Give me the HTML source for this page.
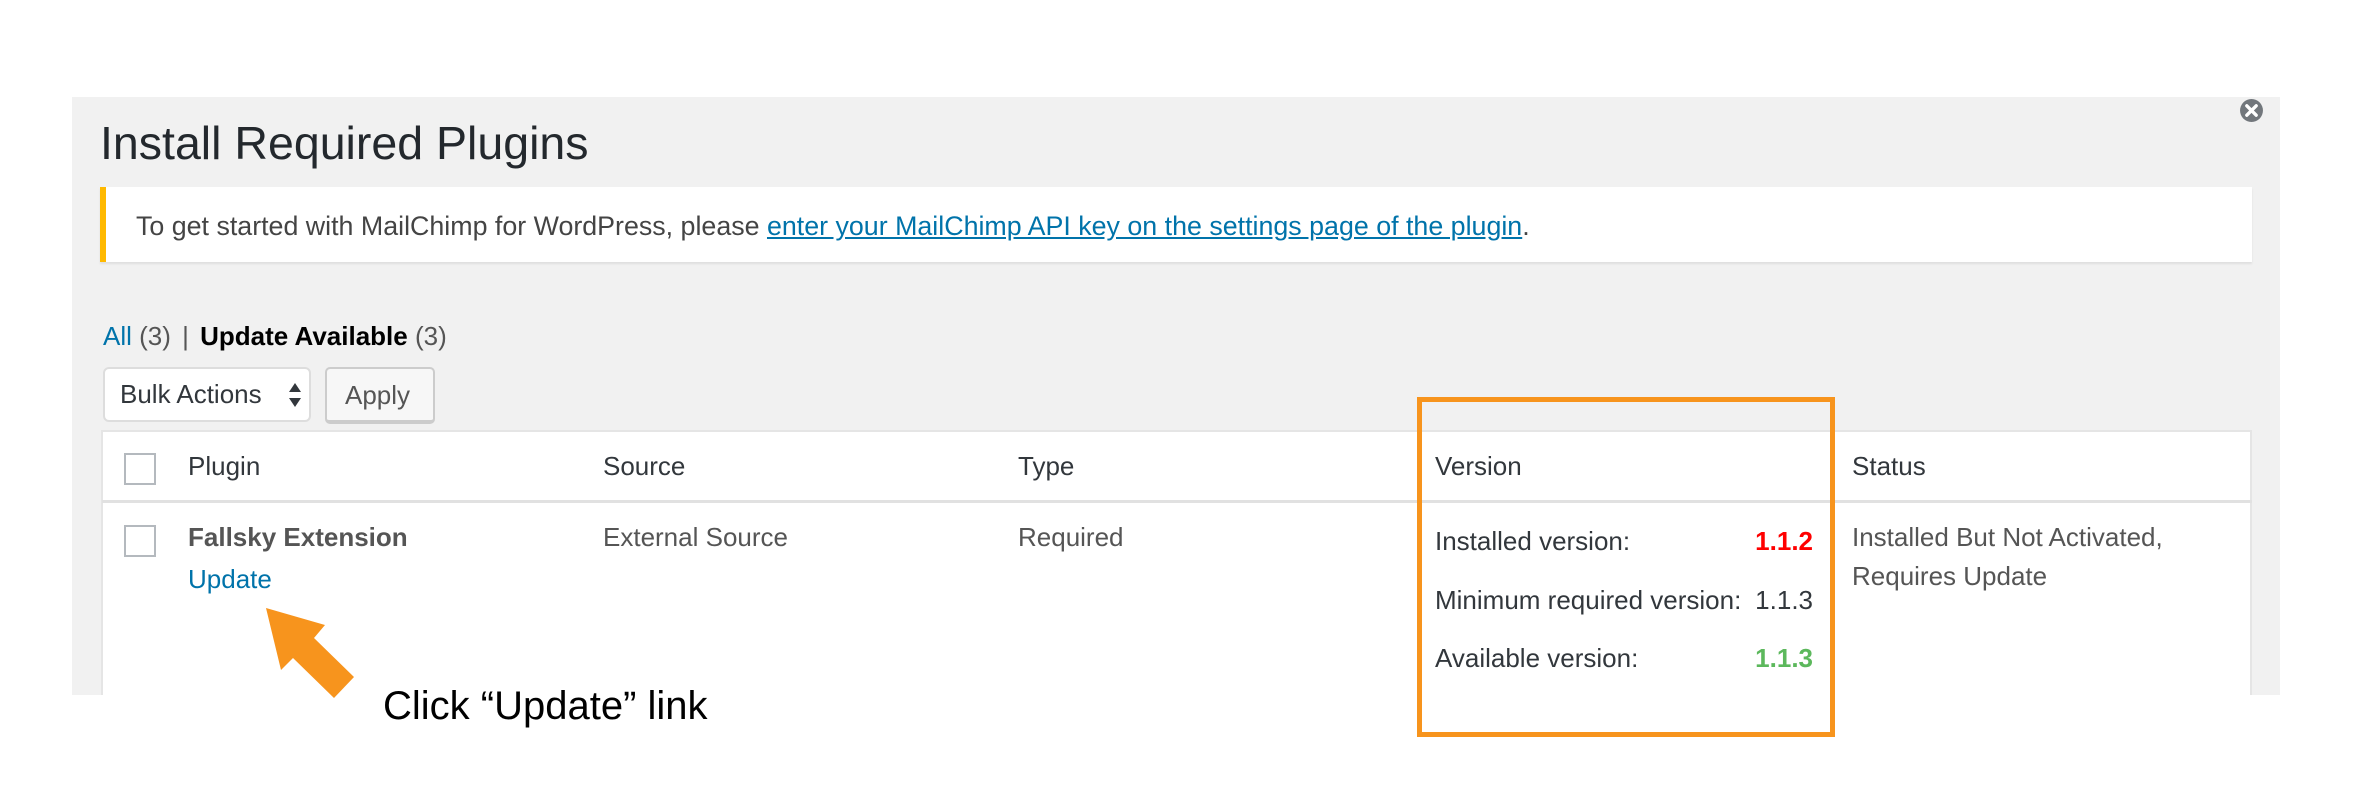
<!DOCTYPE html>
<html><head><meta charset="utf-8"><style>
*{margin:0;padding:0;box-sizing:border-box}
body{width:2354px;height:792px;background:#fff;position:relative;overflow:hidden;font-family:"Liberation Sans",Arial,sans-serif;color:#23282d}
.a{position:absolute;white-space:nowrap}
#panel{position:absolute;left:72px;top:97px;width:2208px;height:598px;background:#f1f1f1}
#notice{position:absolute;left:100px;top:187px;width:2152px;height:75px;background:#fff;border-left:6px solid #ffb900;box-shadow:0 2px 2px rgba(0,0,0,.08)}
a{color:#0073aa}
.t{font-size:26px;line-height:30px}
.cb{position:absolute;width:32px;height:32px;border:2px solid #b4b9be;background:#fff}
#table{position:absolute;left:101px;top:430px;width:2151px;height:265px;background:#fff;border:2px solid #e5e5e5;border-bottom:none}
</style></head><body>
<div id="panel"></div>
<svg class="a" style="left:2239px;top:98px" width="25" height="25" viewBox="0 0 24 24"><circle cx="12" cy="12" r="11" fill="#72777c"/><path d="M7.5 7.5l9 9M16.5 7.5l-9 9" stroke="#fff" stroke-width="3.2" stroke-linecap="round"/></svg>
<div class="a" style="left:100px;top:116px;font-size:46.5px;line-height:54px;color:#23282d">Install Required Plugins</div>
<div id="notice"></div>
<div class="a t" style="left:136px;top:211px;color:#444;font-size:26.8px">To get started with MailChimp for WordPress, please <a style="text-decoration:underline">enter your MailChimp API key on the settings page of the plugin</a>.</div>
<div class="a t" style="left:103px;top:321px;color:#555"><span style="color:#0073aa">All</span> (3) <span style="color:#555;margin:0 4px">|</span> <b style="color:#000">Update Available</b> (3)</div>
<div class="a" style="left:103px;top:367px;width:208px;height:55px;background:#fff;border:2px solid #ddd;border-radius:6px"></div>
<div class="a t" style="left:120px;top:379px;color:#32373c">Bulk Actions</div>
<svg class="a" style="left:287px;top:382px" width="16" height="26" viewBox="0 0 16 26"><path d="M8 1L14 10H2z M8 25L14 16H2z" fill="#32373c"/></svg>
<div class="a" style="left:325px;top:367px;width:110px;height:57px;background:#f7f7f7;border:2px solid #ccc;border-bottom:4px solid #ccc;border-radius:5px"></div>
<div class="a t" style="left:345px;top:380px;color:#555">Apply</div>
<div id="table"></div>
<div class="a" style="left:102px;top:500px;width:2150px;height:3px;background:#e1e1e1"></div>
<div class="cb" style="left:124px;top:453px"></div>
<div class="a t" style="left:188px;top:451px;color:#32373c">Plugin</div>
<div class="a t" style="left:603px;top:451px;color:#32373c">Source</div>
<div class="a t" style="left:1018px;top:451px;color:#32373c">Type</div>
<div class="a t" style="left:1435px;top:451px;color:#32373c">Version</div>
<div class="a t" style="left:1852px;top:451px;color:#32373c">Status</div>
<div class="cb" style="left:124px;top:525px"></div>
<div class="a t" style="left:188px;top:522px;color:#555;font-weight:bold">Fallsky Extension</div>
<div class="a t" style="left:188px;top:564px;color:#0073aa">Update</div>
<div class="a t" style="left:603px;top:522px;color:#555">External Source</div>
<div class="a t" style="left:1018px;top:522px;color:#555">Required</div>
<div class="a t" style="left:1435px;top:526px;color:#32373c">Installed version:</div>
<div class="a t" style="left:1435px;top:585px;color:#32373c">Minimum required version:</div>
<div class="a t" style="left:1435px;top:643px;color:#32373c">Available version:</div>
<div class="a t" style="left:1700px;width:113px;text-align:right;top:526px;color:#f00;font-weight:bold">1.1.2</div>
<div class="a t" style="left:1700px;width:113px;text-align:right;top:585px;color:#32373c">1.1.3</div>
<div class="a t" style="left:1700px;width:113px;text-align:right;top:643px;color:#5cb85c;font-weight:bold">1.1.3</div>
<div class="a t" style="left:1852px;top:522px;color:#555">Installed But Not Activated,</div>
<div class="a t" style="left:1852px;top:561px;color:#555">Requires Update</div>
<div class="a" style="left:1417px;top:397px;width:418px;height:340px;border:5px solid #f7941d"></div>
<svg class="a" style="left:0;top:0" width="400" height="792"><polygon points="266,608 325,625 314,638 354,677 334,698 293,658 281,670" fill="#f7941d"/></svg>
<div class="a" style="left:383px;top:683px;font-size:40px;line-height:46px;color:#000">Click “Update” link</div>
</body></html>
